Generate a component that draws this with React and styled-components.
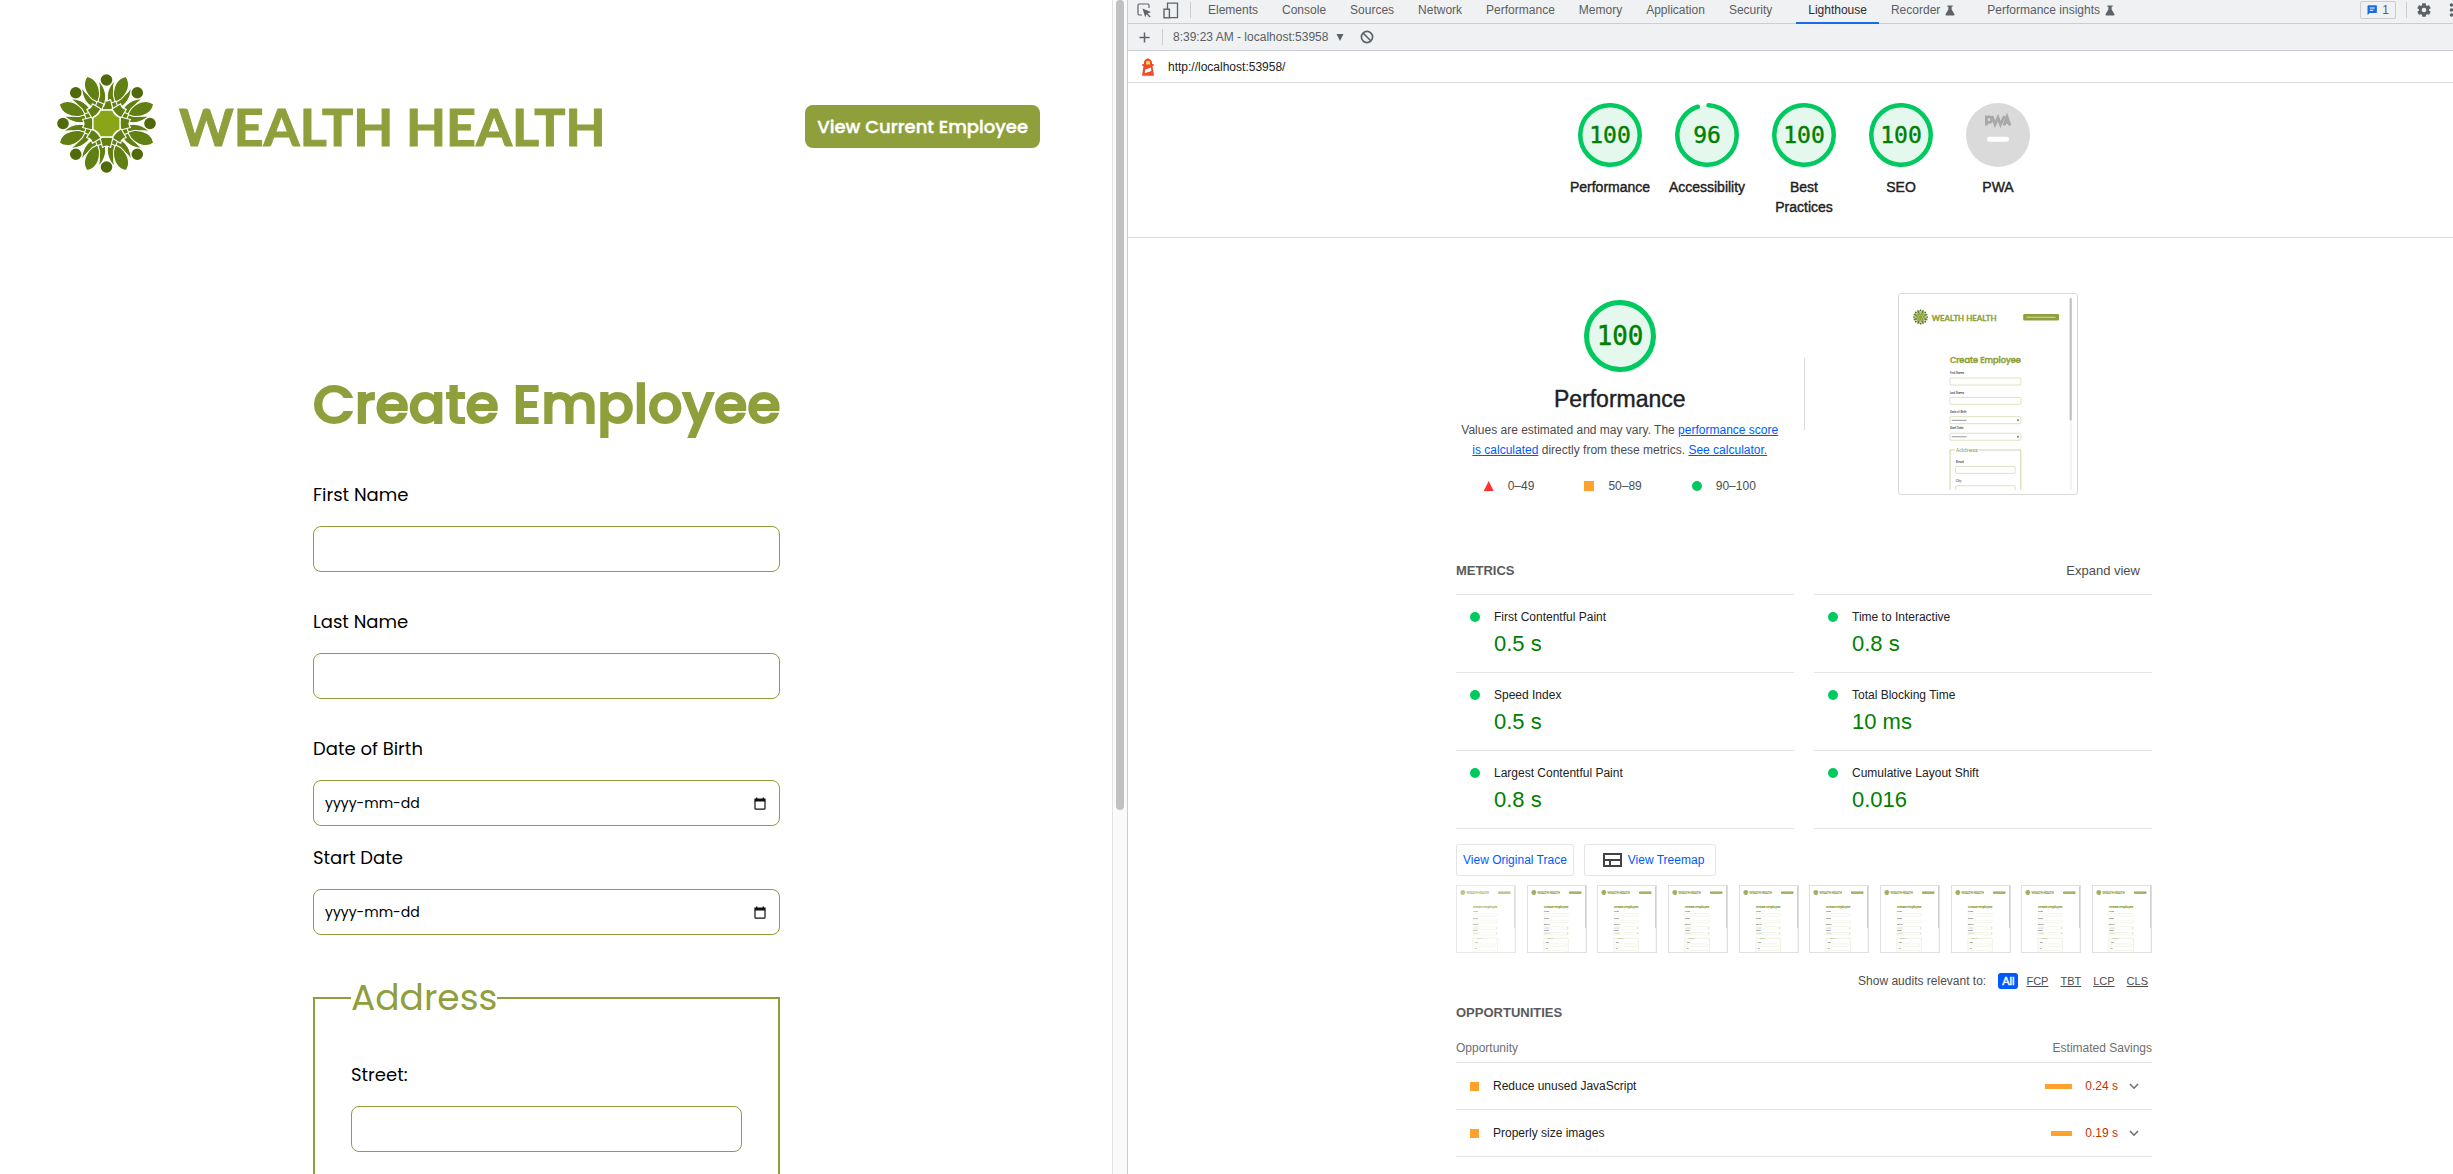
import React from 'react';
import styled, { createGlobalStyle, css } from 'styled-components';

const olive = '#8f9f3c';
const page = '"Poppins", "Inter", sans-serif';
const ui = '"Helvetica Neue", "Liberation Sans", Arial, sans-serif';
const mono = '"Menlo", "DejaVu Sans Mono", monospace';

const GlobalStyle = createGlobalStyle`
  *, *::before, *::after { box-sizing: border-box; }
  html, body { margin: 0; height: 100%; overflow: hidden; background: #fff; }
  button, input { font: inherit; }
`;

const medium = css`
  -webkit-text-stroke: 0.4px currentColor;
`;

const Screen = styled.div`
  display: grid;
  grid-template-columns: 1127fr 1326fr;
  height: 100vh;
  overflow: hidden;
`;

/* ---------- Application page ---------- */

const Viewport = styled.section`
  display: flex;
  min-width: 0;
  overflow: hidden;
  font-family: ${page};
  color: #000;
`;

const PageBody = styled.div`
  flex: 1;
  min-width: 0;
`;

const ScrollTrack = styled.div`
  width: 15px;
  padding: 0 3px;
  background: #fafafa;
  border-left: 1px solid #e3e3e3;
`;

const ScrollThumb = styled.div`
  width: 8px;
  height: 69%;
  border-radius: 4px;
  background: #c1c1c1;
`;

const PageHeader = styled.header`
  display: flex;
  align-items: center;
  justify-content: space-between;
  padding: 73px 72px 0 56px;
`;

const Brand = styled.div`
  display: flex;
  align-items: center;
  gap: 22px;
`;

const BrandName = styled.span`
  font-family: "Lato", sans-serif;
  font-weight: 700;
  font-size: 52px;
  line-height: 64px;
  color: ${olive};
  white-space: nowrap;
  -webkit-text-stroke: 1px currentColor;
`;

const PageButton = styled.button`
  height: 43px;
  padding: 0 12px;
  border: 0;
  border-radius: 8px;
  background: ${olive};
  color: #fff;
  font-size: 18px;
  font-weight: 500;
  white-space: nowrap;
  ${medium}
`;

const Form = styled.form`
  width: 467px;
  max-width: 100%;
  margin: 181px auto 0;
`;

const FormArea = styled.main`
  padding-right: 19px;
`;

const Title = styled.h1`
  margin: 0 0 33px;
  font-size: 54px;
  font-weight: 500;
  line-height: 88px;
  color: ${olive};
  white-space: nowrap;
  -webkit-text-stroke: 2px currentColor;
`;

const Field = styled.div`
  display: flex;
  flex-direction: column;
  gap: 18px;
  margin-bottom: ${(p) => (p.$tight ? 18 : 36)}px;
`;

const FieldLabel = styled.label`
  font-size: 18px;
  line-height: 27px;
`;

const box = css`
  height: 46px;
  border: 1px solid ${olive};
  border-radius: 8px;
  background: #fff;
`;

const TextBox = styled.input`
  ${box}
  width: 100%;
  padding: 0 11px;
`;

const DateBox = styled.div`
  ${box}
  display: flex;
  align-items: center;
  padding: 0 13px 0 11px;
`;

const DateInput = styled.input`
  flex: 1;
  min-width: 0;
  padding: 0;
  border: 0;
  outline: 0;
  font-size: 14px;
  &::placeholder { color: #000; opacity: 1; }
`;

const IconButton = styled.button`
  display: flex;
  align-items: center;
  justify-content: center;
  padding: 0;
  border: 0;
  background: none;
  color: inherit;
`;

const Address = styled.fieldset`
  margin: 0;
  padding: 36px 36px 0;
  border: 2px solid ${olive};
`;

const Legend = styled.legend`
  padding: 0;
  font-size: 36px;
  line-height: 54px;
  color: ${olive};
`;

/* ---------- Developer tools ---------- */

const Tools = styled.section`
  min-width: 0;
  overflow: hidden;
  border-left: 1px solid #cacdd1;
  font-family: ${ui};
  font-size: 12px;
  line-height: 20px;
  color: #212121;
`;

const Bar = styled.div`
  display: flex;
  align-items: center;
  height: ${(p) => p.$height}px;
  border-bottom: 1px solid #cacdd1;
  background: #eff1f3;
  color: #5a5e62;
`;

const Tab = styled.button`
  display: flex;
  align-items: center;
  gap: 5px;
  height: 24px;
  padding: 0 12px 2px;
  border: 0;
  border-bottom: 2px solid ${(p) => (p.$active ? '#1a6bea' : 'transparent')};
  background: none;
  color: ${(p) => (p.$active ? '#2b2d30' : '#5a5e62')};
  line-height: 16px;
  white-space: nowrap;
  align-self: flex-start;
  ${(p) => p.$active && 'margin-left: 12px;'}
  ${(p) => p.$preview && 'padding-right: 20px;'}
`;

const BarIcons = styled.div`
  display: flex;
  align-items: center;
  gap: 11px;
  padding: 0 5px 3px 9px;
`;

const Rule = styled.span`
  width: 1px;
  height: 16px;
  background: #cacdd1;
`;

const BarEnd = styled.div`
  display: flex;
  align-items: center;
  gap: 10px;
  margin-left: auto;
  padding-bottom: 3px;
  overflow: hidden;
`;

const Issues = styled.button`
  display: flex;
  align-items: center;
  gap: 5px;
  width: 36px;
  height: 18px;
  padding: 0 6px;
  border: 1px solid #cacdd1;
  border-radius: 2px;
  background: none;
  color: #5a5e62;
  line-height: 16px;
`;

const MoreButton = styled(IconButton)`
  width: 12px;
  justify-content: flex-end;
`;

const RunBar = styled(Bar)`
  padding: 0 16px 0 9px;
`;

const RunSelect = styled.button`
  display: flex;
  align-items: center;
  gap: 8px;
  padding: 0;
  margin: 0 16px 0 10px;
  border: 0;
  background: none;
  color: #5a5e62;
  font-size: 12px;
`;

const AddButton = styled(IconButton)`
  width: 14px;
  margin-right: 11px;
`;

const UrlRow = styled.div`
  display: flex;
  align-items: center;
  gap: 12px;
  height: 32px;
  padding: 0 12px;
  border-bottom: 1px solid #dcdcdc;
`;

const Scores = styled.nav`
  display: flex;
  justify-content: center;
  padding: 20px 0 20px 27px;
  border-bottom: 1px solid #dcdcdc;
`;

const Score = styled.a`
  display: flex;
  flex-direction: column;
  align-items: center;
  gap: 10px;
  width: 97px;
  padding: 0 6px;
  font-size: 14px;
  text-align: center;
  text-decoration: none;
  color: #212121;
  ${medium}
`;

const Report = styled.div`
  padding-left: 27px;
`;

const Column = styled.div`
  width: 696px;
  max-width: 100%;
  margin: 0 auto;
  padding-top: 54px;
`;

const Summary = styled.div`
  display: grid;
  grid-template-columns: 1fr 1px 1fr;
  column-gap: 20px;
  align-items: center;
  justify-items: center;
`;

const SummaryText = styled.div`
  display: flex;
  flex-direction: column;
  align-items: center;
  padding-top: 8px;
`;

const SummaryTitle = styled.h2`
  margin: 13px 0 7px;
  font-size: 23px;
  font-weight: 400;
  line-height: 28px;
  ${medium}
`;

const Note = styled.p`
  margin: 0 0 16px;
  text-align: center;
  color: #4d4d4d;
`;

const Link = styled.a`
  color: #0059ff;
  text-decoration: underline;
  text-underline-offset: 1px;
`;

const Divider = styled.span`
  width: 1px;
  height: 72px;
  background: #dcdcdc;
`;

const ScaleList = styled.ul`
  display: flex;
  gap: 50px;
  margin: 0;
  padding: 0;
  list-style: none;
  color: #4d4d4d;
`;

const ScaleItem = styled.li`
  display: flex;
  align-items: center;
  gap: 14px;
`;

const Shot = styled.figure`
  display: flex;
  justify-content: center;
  width: 180px;
  height: 202px;
  margin: 0;
  padding: 4px;
  border: 1px solid #d9d9d9;
  border-radius: 3px;
`;

const SectionHead = styled.div`
  display: flex;
  justify-content: space-between;
  margin: 65px 0 13px;
`;

const SectionTitle = styled.h3`
  margin: 0;
  font-size: 13px;
  font-weight: 700;
  line-height: 20px;
  color: #5a5a5a;
`;

const ExpandButton = styled.button`
  padding: 0 12px 0 0;
  border: 0;
  background: none;
  font-size: 13px;
  line-height: 20px;
  color: #4d4d4d;
`;

const Metrics = styled.div`
  display: grid;
  grid-template-columns: 1fr 1fr;
  column-gap: 20px;
`;

const Metric = styled.div`
  display: flex;
  gap: 14px;
  padding: 12px 14px 14px;
  border-top: 1px solid #e4e4e4;
  ${(p) => p.$last && 'border-bottom: 1px solid #e4e4e4;'}
`;

const MetricText = styled.div`
  display: flex;
  flex-direction: column;
  gap: 3px;
`;

const MetricValue = styled.span`
  font-size: 22px;
  line-height: 28px;
  color: #008000;
`;

const Mark = styled.span`
  flex: none;
  width: ${(p) => p.$size || 10}px;
  height: ${(p) => p.$size || 10}px;
  background: ${(p) => p.$color};
  border-radius: ${(p) => (p.$round ? '50%' : '0')};
  ${(p) => p.$triangle && 'clip-path: polygon(50% 0, 100% 100%, 0 100%);'}
`;

const MetricMark = styled(Mark)`
  margin-top: 5px;
`;

const Actions = styled.div`
  display: flex;
  gap: 10px;
  margin: 15px 0 9px;
`;

const ActionButton = styled.button`
  display: flex;
  align-items: center;
  gap: 6px;
  height: 32px;
  padding: 0 ${(p) => (p.$wide ? '11px 0 18px' : '6px')};
  border: 1px solid #e4e4e4;
  border-radius: 3px;
  background: #fff;
  color: #0059ff;
  font-size: 12px;
  white-space: nowrap;
`;

const Filmstrip = styled.div`
  display: flex;
  justify-content: space-between;
`;

const Frame = styled.div`
  display: flex;
  width: 60px;
  height: 68px;
  border: 1px solid #e0e0e0;
  opacity: ${(p) => (p.$faint ? 0.7 : 1)};
`;

const Filters = styled.fieldset`
  display: flex;
  align-items: center;
  justify-content: flex-end;
  gap: 4px;
  margin: 18px 0 12px;
  padding: 0;
  border: 0;
  color: #4d4d4d;
`;

const FilterCaption = styled.span`
  margin-right: 8px;
`;

const HiddenRadio = styled.input`
  position: absolute;
  opacity: 0;
  pointer-events: none;
`;

const Filter = styled.label`
  padding: 0 4px;
  border-radius: 3px;
  font-size: 11px;
  line-height: 16px;
  text-decoration: underline;
  text-underline-offset: 1px;
  ${HiddenRadio}:checked + & {
    background: #0059ff;
    color: #fff;
    text-decoration: none;
    ${medium}
  }
`;

const Audits = styled.table`
  width: 100%;
  margin-top: 15px;
  border-collapse: collapse;
`;

const HeadCell = styled.th`
  padding: 0 0 4px;
  font-weight: 400;
  text-align: ${(p) => (p.$end ? 'right' : 'left')};
  color: #6f6f6f;
`;

const AuditRow = styled.tr`
  height: 47px;
  border-top: 1px solid #e4e4e4;
  border-bottom: 1px solid #e4e4e4;
`;

const AuditCell = styled.td`
  padding: 0;
`;

const AuditName = styled.div`
  display: flex;
  align-items: center;
  gap: 14px;
  padding-left: 14px;
`;

const Saving = styled.div`
  display: flex;
  align-items: center;
  justify-content: flex-end;
  padding-right: 12px;
  color: #c33300;
`;

const SavingBar = styled.span`
  height: 5px;
  margin-right: 13px;
  background: #ffa12c;
`;

const SavingToggle = styled(IconButton)`
  margin-left: 10px;
  width: 12px;
  color: #6f6f6f;
`;

/* ---------- Drawings ---------- */

const turns = [0, 45, 90, 135, 180, 225, 270, 315];

function Flower() {
  return (
    <g>
      {turns.map((a) => (
        <g key={a} stroke="#fff" strokeWidth="1.1" strokeLinejoin="round" fill="#617f12">
          <g transform={`rotate(${a + 22.5})`}>
            <path d="M-9-43C-13-33-11-24-4-17L1-24C-5-30-8-36-9-43Z" />
            <path d="M9-43C13-33 11-24 4-17L-1-24C5-30 8-36 9-43Z" />
            <path d="M0-51C8-46 8-36 4-28L0-23L-4-28C-8-36-8-46 0-51Z" />
            <path d="M0-24L5-19L0-13L-5-19Z" />
          </g>
          <path transform={`rotate(${a})`} d="M-4-24Q0-21 4-24L6.5-14Q0-12.5-6.5-14Z" />
        </g>
      ))}
      {turns.map((a) => (
        <circle key={a} cy="-43.5" r="5.8" fill="#4f690b" transform={`rotate(${a})`} />
      ))}
      <path
        d="M-6-13.5H6Q8-8 13.5-6V6Q8 8 6 13.5H-6Q-8 8-13.5 6V-6Q-8-8-6-13.5Z"
        fill="#8aa518"
        stroke="#fff"
        strokeWidth="1.3"
      />
    </g>
  );
}

function BrandMark() {
  return (
    <svg width="101" height="106" viewBox="-50.5 -50.5 101 106" aria-hidden="true">
      <Flower />
    </svg>
  );
}

function PagePreview() {
  const fields = [
    ['First Name', 501],
    ['Last Name', 628],
    ['Date of Birth', 755],
    ['Start Date', 864],
  ];
  return (
    <svg width="100%" height="100%" viewBox="0 0 1127 1262" preserveAspectRatio="xMidYMin slice" aria-hidden="true">
      <g transform="translate(120 125)">
        <Flower />
      </g>
      <text x="193" y="149" fontFamily="Lato" fontWeight="700" fontSize="52" fill={olive} stroke={olive} strokeWidth="2">WEALTH HEALTH</text>
      <rect x="795" y="105" width="235" height="43" rx="8" fill={olive} />
      <rect x="816" y="123" width="192" height="7" fill="#fff" opacity="0.6" />
      <text x="313" y="424" fontFamily="Poppins" fontWeight="500" fontSize="54" fill={olive} stroke={olive} strokeWidth="3">Create Employee</text>
      {fields.map(([name, y]) => (
        <g key={name}>
          <text x="313" y={y} fontFamily="Poppins" fontSize="18" fill="#000">{name}</text>
          <rect x="313" y={y + 25} width="467" height="46" rx="8" fill="none" stroke={olive} strokeWidth="2" />
        </g>
      ))}
      {[803, 912].map((y) => (
        <g key={y} fill="#777">
          <rect x="325" y={y - 2} width="98" height="5" />
          <rect x="755" y={y - 6} width="11" height="12" />
        </g>
      ))}
      <path d="M346 999H314V1300M500 999H779V1300" fill="none" stroke={olive} strokeWidth="3" />
      <text x="351" y="1011" fontFamily="Poppins" fontSize="36" fill={olive}>Address</text>
      <text x="351" y="1082" fontFamily="Poppins" fontSize="18">Street:</text>
      <rect x="351" y="1107" width="391" height="46" rx="8" fill="none" stroke={olive} strokeWidth="2" />
      <text x="351" y="1208" fontFamily="Poppins" fontSize="18">City:</text>
      <rect x="351" y="1234" width="391" height="46" rx="8" fill="none" stroke={olive} strokeWidth="2" />
      <rect x="1100" y="0" width="16" height="1262" fill="#f4f4f4" />
      <rect x="1100" y="0" width="14" height="805" rx="6" fill="#c1c1c1" />
    </svg>
  );
}

function Gauge({ size, value, gap }) {
  const r = 29.7;
  const len = 2 * Math.PI * r;
  return (
    <svg width={size} height={size} viewBox="0 0 64 64" aria-hidden="true">
      <circle cx="32" cy="32" r={r} fill="#e5f8ee" />
      <circle
        cx="32"
        cy="32"
        r={r}
        fill="none"
        stroke="#00c95f"
        strokeWidth="4.5"
        strokeLinecap={gap ? 'round' : 'butt'}
        strokeDasharray={gap ? `${len * 0.94} ${len}` : 'none'}
        transform="rotate(-87 32 32)"
      />
      <text
        x="32"
        y="40.3"
        textAnchor="middle"
        fontFamily={mono}
        fontSize="23"
        fill="#008000"
        stroke="#008000"
        strokeWidth="0.4"
      >
        {value}
      </text>
    </svg>
  );
}

function PwaGauge() {
  return (
    <svg width="64" height="64" viewBox="0 0 64 64" aria-hidden="true">
      <circle cx="32" cy="32" r="32" fill="#dadada" />
      <g fill="none" stroke="#a8a8a8" strokeWidth="2.8">
        <path d="M20.4 22.5V13.8H23Q25.5 13.8 25.5 16.6T23 19.3H20.2" />
        <path d="M26 13L29 21.5L32 14.5L34.5 21.5L38.5 13" />
        <path d="M38 22.5L41 13.8L44 22.5M39.5 19.5H43" />
      </g>
      <path d="M23.5 36.3H40.5" stroke="#fff" strokeWidth="5" strokeLinecap="round" />
    </svg>
  );
}

function InspectIcon() {
  return (
    <svg width="15" height="15" viewBox="0 0 15 15" aria-hidden="true">
      <path d="M5 12H2.2Q1 12 1 10.8V2.2Q1 1 2.2 1H10.8Q12 1 12 2.2V5" fill="none" stroke="#5f6368" strokeWidth="1.2" />
      <path d="M5.5 5.5L14 9L10.6 10.4L13.6 13.4L12.6 14.4L9.6 11.3L8.2 14.2Z" fill="#5f6368" />
    </svg>
  );
}

function DeviceIcon() {
  return (
    <svg width="16" height="17" viewBox="0 0 16 17" aria-hidden="true">
      <path d="M4.5 7V1.2H14.5V15.6H7" fill="none" stroke="#5f6368" strokeWidth="1.3" />
      <rect x="1" y="7.2" width="5.4" height="8.6" fill="none" stroke="#5f6368" strokeWidth="1.4" />
    </svg>
  );
}

function FlaskIcon() {
  return (
    <svg width="10" height="11" viewBox="0 0 11 12" aria-hidden="true">
      <path d="M2.6 0.6H8.4V1.8H7.3V5L10.4 10.2Q10.8 11.4 9.6 11.4H1.4Q0.2 11.4 0.6 10.2L3.7 5V1.8H2.6Z" fill="#5f6368" />
    </svg>
  );
}

function IssueIcon() {
  return (
    <svg width="12" height="12" viewBox="0 0 12 12" aria-hidden="true">
      <path d="M1.8 0.5H10.6Q11.5 0.5 11.5 1.4V8.6Q11.5 9.5 10.6 9.5H3.2L0.6 11.8V1.4Q0.6 0.5 1.8 0.5Z" fill="#1a6bea" />
      <path d="M3.2 3.6H9M3.2 6.4H7.4" stroke="#fff" strokeWidth="1.2" />
    </svg>
  );
}

function GearIcon() {
  return (
    <svg width="14" height="14" viewBox="0 0 14 14" aria-hidden="true">
      <g fill="#5f6368">
        {[0, 60, 120].map((a) => (
          <rect key={a} x="5.1" y="0.2" width="3.8" height="13.6" rx="0.6" transform={`rotate(${a} 7 7)`} />
        ))}
        <circle cx="7" cy="7" r="5.2" />
      </g>
      <circle cx="7" cy="7" r="2.3" fill="#eff1f3" />
    </svg>
  );
}

function DotsIcon() {
  return (
    <svg width="4" height="14" viewBox="0 0 4 14" aria-hidden="true">
      {[2, 7, 12].map((y) => (
        <circle key={y} cx="2.4" cy={y} r="1.7" fill="#5f6368" />
      ))}
    </svg>
  );
}

function PlusIcon() {
  return (
    <svg width="11" height="11" viewBox="0 0 11 11" aria-hidden="true">
      <path d="M5.5 0.5V10.5M0.5 5.5H10.5" stroke="#5f6368" strokeWidth="1.5" />
    </svg>
  );
}

function CaretIcon() {
  return (
    <svg width="8" height="7" viewBox="0 0 8 7" aria-hidden="true">
      <path d="M0.5 0H7.5L4 7Z" fill="#5f6368" />
    </svg>
  );
}

function ClearIcon() {
  return (
    <svg width="14" height="14" viewBox="0 0 14 14" aria-hidden="true">
      <circle cx="7" cy="7" r="5.6" fill="none" stroke="#5f6368" strokeWidth="1.7" />
      <path d="M3 3L11 11" stroke="#5f6368" strokeWidth="1.7" />
    </svg>
  );
}

function LighthouseIcon() {
  return (
    <svg width="16" height="18" viewBox="0 0 16 18" aria-hidden="true">
      <path d="M4 6V4Q4.4 1.6 8 0.3Q11.6 1.6 12 4V6H13.6V8H12.5L14 17.8H2L3.5 8H2.4V6Z" fill="#f04a2a" />
      <path d="M6 3.6Q8 2 10 3.6V6.4H6Z" fill="#ffd75c" />
      <path d="M5.2 11.6L11 9.6L11.3 13L4.8 15.2Z" fill="#fff" />
    </svg>
  );
}

function TreemapIcon() {
  return (
    <svg width="19" height="14" viewBox="0 0 19 14" aria-hidden="true">
      <path d="M1 1H18V13H1ZM1 7H18M7 7V13" fill="none" stroke="#424242" strokeWidth="2" />
    </svg>
  );
}

function CalendarIcon() {
  return (
    <svg width="12" height="13" viewBox="0 0 12 13" aria-hidden="true">
      <path d="M1 4V11.4Q1 12.2 1.8 12.2H10.2Q11 12.2 11 11.4V4" fill="none" stroke="#111" strokeWidth="1.2" />
      <path d="M0.4 1.6H2V0.4H3.3V1.6H8.7V0.4H10V1.6H11.6V4.4H0.4Z" fill="#111" />
    </svg>
  );
}

function ChevronIcon() {
  return (
    <svg width="10" height="7" viewBox="0 0 10 7" aria-hidden="true">
      <path d="M1 1L5 5.2L9 1" fill="none" stroke="currentColor" strokeWidth="1.6" />
    </svg>
  );
}

/* ---------- Content ---------- */

const tabs = [
  { name: 'Elements' },
  { name: 'Console' },
  { name: 'Sources' },
  { name: 'Network' },
  { name: 'Performance' },
  { name: 'Memory' },
  { name: 'Application' },
  { name: 'Security' },
  { name: 'Lighthouse', active: true },
  { name: 'Recorder', preview: true },
  { name: 'Performance insights', preview: true },
];

const scores = [
  { name: 'Performance', value: 100 },
  { name: 'Accessibility', value: 96 },
  { name: 'Best Practices', value: 100 },
  { name: 'SEO', value: 100 },
];

const metrics = [
  ['First Contentful Paint', '0.5 s'],
  ['Time to Interactive', '0.8 s'],
  ['Speed Index', '0.5 s'],
  ['Total Blocking Time', '10 ms'],
  ['Largest Contentful Paint', '0.8 s'],
  ['Cumulative Layout Shift', '0.016'],
];

const audits = [
  { name: 'Reduce unused JavaScript', saving: '0.24 s', width: 27 },
  { name: 'Properly size images', saving: '0.19 s', width: 21 },
];

function TextField({ id, label }) {
  return (
    <Field>
      <FieldLabel htmlFor={id}>{label}</FieldLabel>
      <TextBox id={id} type="text" />
    </Field>
  );
}

function DateField({ id, label, tight }) {
  return (
    <Field $tight={tight}>
      <FieldLabel htmlFor={id}>{label}</FieldLabel>
      <DateBox>
        <DateInput id={id} type="text" placeholder="yyyy-mm-dd" />
        <IconButton type="button" aria-label={`Pick ${label}`}>
          <CalendarIcon />
        </IconButton>
      </DateBox>
    </Field>
  );
}

function EmployeePage() {
  return (
    <Viewport>
      <PageBody>
        <PageHeader>
          <Brand>
            <BrandMark />
            <BrandName>WEALTH HEALTH</BrandName>
          </Brand>
          <PageButton type="button">View Current Employee</PageButton>
        </PageHeader>
        <FormArea>
          <Form>
            <Title>Create Employee</Title>
            <TextField id="first-name" label="First Name" />
            <TextField id="last-name" label="Last Name" />
            <DateField id="birth-date" label="Date of Birth" tight />
            <DateField id="start-date" label="Start Date" />
            <Address>
              <Legend>Address</Legend>
              <TextField id="street" label="Street:" />
            </Address>
          </Form>
        </FormArea>
      </PageBody>
      <ScrollTrack>
        <ScrollThumb />
      </ScrollTrack>
    </Viewport>
  );
}

function DevTools() {
  return (
    <Tools>
      <Bar $height={24}>
        <BarIcons>
          <IconButton type="button" aria-label="Inspect"><InspectIcon /></IconButton>
          <IconButton type="button" aria-label="Device toolbar"><DeviceIcon /></IconButton>
          <Rule />
        </BarIcons>
        {tabs.map((t) => (
          <Tab key={t.name} type="button" $active={t.active} $preview={t.preview}>
            {t.name}
            {t.preview && <FlaskIcon />}
          </Tab>
        ))}
        <BarEnd>
          <Issues type="button"><IssueIcon />1</Issues>
          <Rule />
          <IconButton type="button" aria-label="Settings"><GearIcon /></IconButton>
          <MoreButton type="button" aria-label="More"><DotsIcon /></MoreButton>
        </BarEnd>
      </Bar>
      <RunBar $height={27}>
        <AddButton type="button" aria-label="New report"><PlusIcon /></AddButton>
        <Rule />
        <RunSelect type="button">8:39:23 AM - localhost:53958 <CaretIcon /></RunSelect>
        <IconButton type="button" aria-label="Clear all"><ClearIcon /></IconButton>
      </RunBar>
      <UrlRow>
        <LighthouseIcon />
        <span>http://localhost:53958/</span>
      </UrlRow>
      <Scores>
        {scores.map((s) => (
          <Score key={s.name} href="#performance">
            <Gauge size={64} value={s.value} gap={s.value < 100} />
            {s.name}
          </Score>
        ))}
        <Score href="#pwa">
          <PwaGauge />
          PWA
        </Score>
      </Scores>
      <Report>
        <Column>
          <Summary id="performance">
            <SummaryText>
              <Gauge size={72} value={100} />
              <SummaryTitle>Performance</SummaryTitle>
              <Note>
                Values are estimated and may vary. The <Link href="#score">performance score is calculated</Link>{' '}
                directly from these metrics. <Link href="#calculator">See calculator.</Link>
              </Note>
              <ScaleList>
                <ScaleItem><Mark $color="#ff3030" $triangle />0–49</ScaleItem>
                <ScaleItem><Mark $color="#ffa12c" />50–89</ScaleItem>
                <ScaleItem><Mark $color="#00c95f" $round />90–100</ScaleItem>
              </ScaleList>
            </SummaryText>
            <Divider />
            <Shot><PagePreview /></Shot>
          </Summary>

          <SectionHead>
            <SectionTitle>METRICS</SectionTitle>
            <ExpandButton type="button">Expand view</ExpandButton>
          </SectionHead>
          <Metrics>
            {metrics.map(([name, value], i) => (
              <Metric key={name} $last={i > 3}>
                <MetricMark $color="#00c95f" $round />
                <MetricText>
                  <span>{name}</span>
                  <MetricValue>{value}</MetricValue>
                </MetricText>
              </Metric>
            ))}
          </Metrics>

          <Actions>
            <ActionButton type="button">View Original Trace</ActionButton>
            <ActionButton type="button" $wide><TreemapIcon />View Treemap</ActionButton>
          </Actions>
          <Filmstrip>
            {Array.from({ length: 10 }, (_, i) => (
              <Frame key={i} $faint={i === 0}><PagePreview /></Frame>
            ))}
          </Filmstrip>

          <Filters>
            <FilterCaption>Show audits relevant to:</FilterCaption>
            {['All', 'FCP', 'TBT', 'LCP', 'CLS'].map((f) => (
              <React.Fragment key={f}>
                <HiddenRadio type="radio" name="metric" id={`metric-${f}`} defaultChecked={f === 'All'} />
                <Filter htmlFor={`metric-${f}`}>{f}</Filter>
              </React.Fragment>
            ))}
          </Filters>

          <SectionTitle>OPPORTUNITIES</SectionTitle>
          <Audits>
            <thead>
              <tr>
                <HeadCell scope="col">Opportunity</HeadCell>
                <HeadCell scope="col" $end>Estimated Savings</HeadCell>
              </tr>
            </thead>
            <tbody>
              {audits.map((a) => (
                <AuditRow key={a.name}>
                  <AuditCell>
                    <AuditName><Mark $color="#ffa12c" $size={9} />{a.name}</AuditName>
                  </AuditCell>
                  <AuditCell>
                    <Saving>
                      <SavingBar style={{ width: a.width }} />
                      {a.saving}
                      <SavingToggle type="button" aria-label={`Show ${a.name}`}><ChevronIcon /></SavingToggle>
                    </Saving>
                  </AuditCell>
                </AuditRow>
              ))}
            </tbody>
          </Audits>
        </Column>
      </Report>
    </Tools>
  );
}

export default function App() {
  return (
    <>
      <GlobalStyle />
      <Screen>
        <EmployeePage />
        <DevTools />
      </Screen>
    </>
  );
}
